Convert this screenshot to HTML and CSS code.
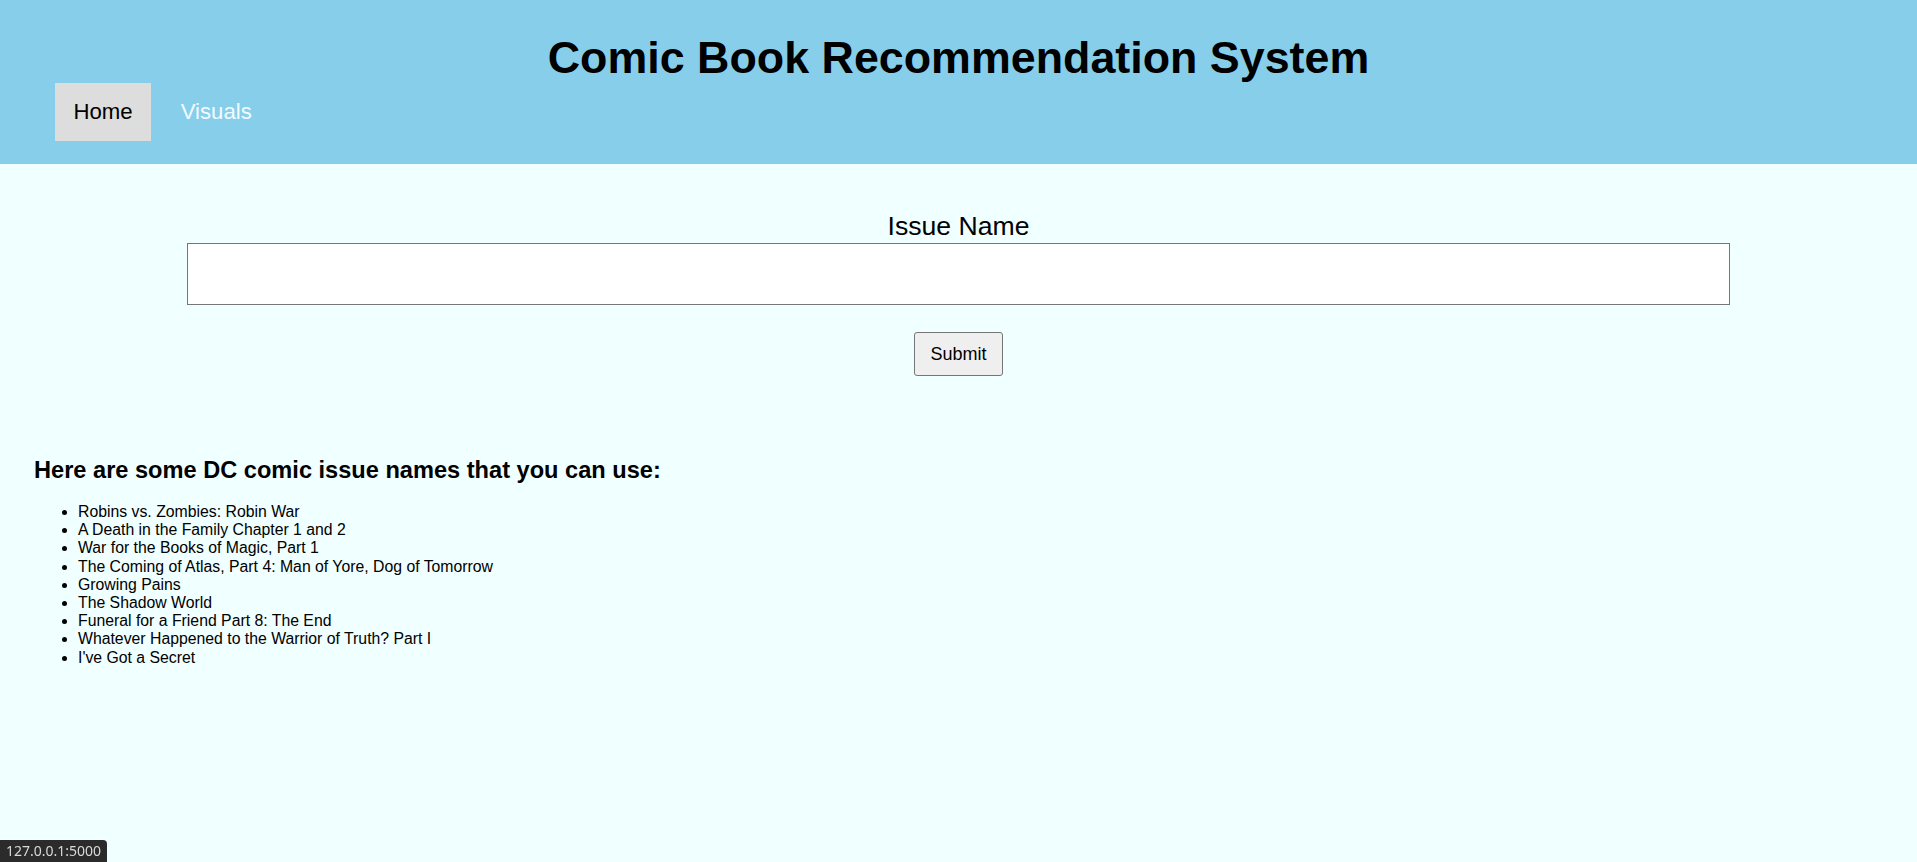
FILE: index.html
```html
<!DOCTYPE html>
<html lang="en">
<head>
<meta charset="utf-8">
<title>Comic Book Recommendation System</title>
<link rel="stylesheet" href="styles.css">
</head>
<body>
<header class="site-header">
  <h1 class="site-title">Comic Book Recommendation System</h1>
  <nav class="nav">
    <a class="nav-link active" href="#">Home</a>
    <a class="nav-link" href="#">Visuals</a>
  </nav>
</header>
<main class="main">
  <form class="search-form">
    <label class="field-label" for="issue">Issue Name</label>
    <input class="field-input" id="issue" type="text">
    <button class="submit-btn" type="button">Submit</button>
  </form>
  <section class="examples">
    <h3 class="examples-title">Here are some DC comic issue names that you can use:</h3>
    <ul class="examples-list">
      <li>Robins vs. Zombies: Robin War</li>
      <li>A Death in the Family Chapter 1 and 2</li>
      <li>War for the Books of Magic, Part 1</li>
      <li>The Coming of Atlas, Part 4: Man of Yore, Dog of Tomorrow</li>
      <li>Growing Pains</li>
      <li>The Shadow World</li>
      <li>Funeral for a Friend Part 8: The End</li>
      <li>Whatever Happened to the Warrior of Truth? Part I</li>
      <li>I've Got a Secret</li>
    </ul>
  </section>
</main>
<div class="status-bubble">127.0.0.1:5000</div>
</body>
</html>
```

FILE: styles.css
```css
html, body {
  margin: 0;
  padding: 0;
}

body {
  background: #f0ffff;
  font-family: "Liberation Sans", Arial, sans-serif;
  color: #000;
  min-height: 862px;
}

.site-header {
  background: #87ceeb;
  padding: 32px 0 23px 0;
}

.site-title {
  margin: 0;
  text-align: center;
  font-size: 44.8px;
  font-weight: bold;
  line-height: normal;
}

.nav {
  display: flex;
  gap: 11px;
  padding-left: 55px;
}

.nav-link {
  display: block;
  font-size: 22.2px;
  line-height: normal;
  padding: 16px 18.5px;
  color: #f2fbff;
  text-decoration: none;
}

.nav-link.active {
  background: #dddddd;
  color: #000;
}

.main {
  padding-top: 47px;
}

.search-form {
  display: flex;
  flex-direction: column;
  align-items: center;
}

.field-label {
  font-size: 26.6px;
  line-height: normal;
}

.field-input {
  box-sizing: border-box;
  width: calc((100% - 16px) * 0.8 + 22px);
  height: 62px;
  margin: 1px 0 0 0;
  padding: 10px;
  border: 1px solid #767676;
  border-radius: 0;
  background: #fff;
  font-family: "Liberation Sans", Arial, sans-serif;
  font-size: 18px;
}

.submit-btn {
  margin-top: 27px;
  height: 44px;
  padding: 0 15.5px;
  font-family: "Liberation Sans", Arial, sans-serif;
  font-size: 18px;
  color: #000;
  background: #efefef;
  border: 1px solid #767676;
  border-radius: 3px;
}

.examples {
  padding-left: 34px;
  margin-top: 81px;
}

.examples-title {
  margin: 0;
  font-size: 23.6px;
  font-weight: bold;
  line-height: normal;
}

.examples-list {
  margin: 19px 0 0 0;
  padding-left: 44px;
  font-size: 15.8px;
  line-height: 18.2px;
}

.status-bubble {
  position: fixed;
  left: 0;
  bottom: 0;
  height: 22px;
  padding: 0 6px;
  background: #2b2b2b;
  color: #d8d8d8;
  font-family: "Noto Sans", "Open Sans", sans-serif;
  font-size: 14px;
  line-height: 22px;
  border-top-right-radius: 4px;
}
```
